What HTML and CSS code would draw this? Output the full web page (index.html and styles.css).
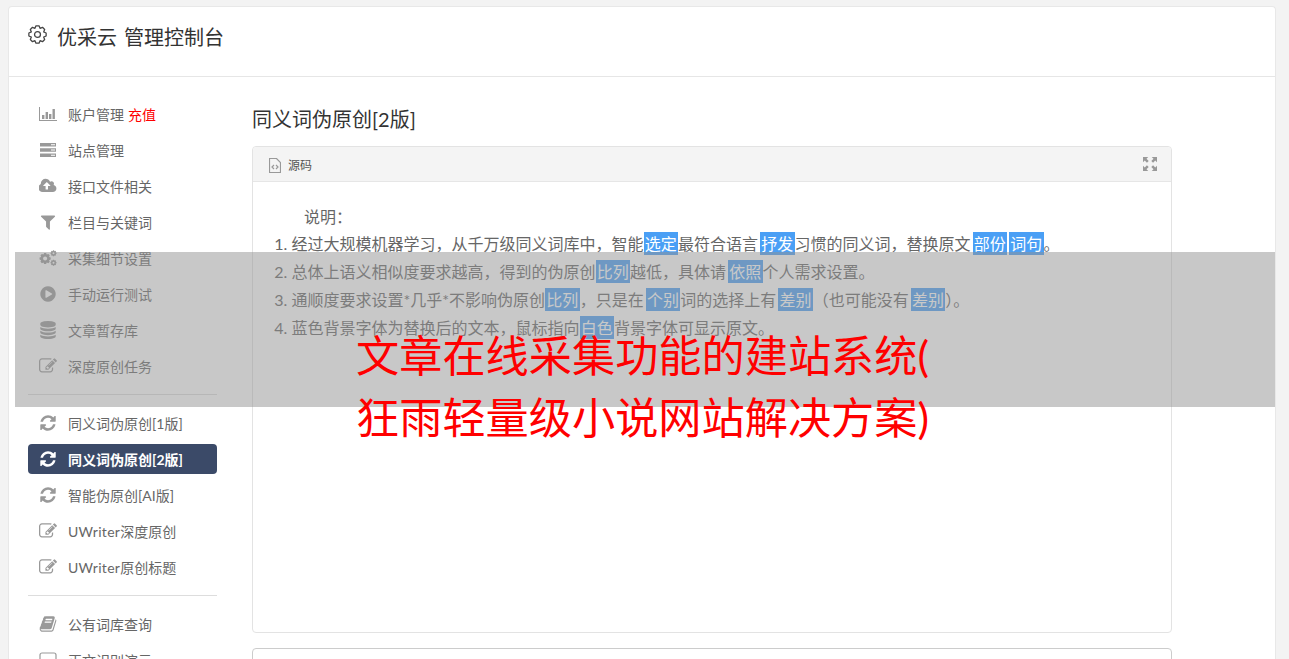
FILE: index.html
```html
<!doctype html>
<html lang="en">
  <head>
    <meta charset="UTF-8" />
    <meta name="viewport" content="width=device-width, initial-scale=1.0" />
    <title>优采云 管理控制台</title>
    <link rel="stylesheet" href="styles.css">
  </head>
  <body>
    <svg class="defs" width="0" height="0">
      <defs>
        <polygon id="cog" points="7.56,.82 10.44,.82 11.41,3.18 13.76,2.2 15.8,4.24 14.82,6.59 17.18,7.56 17.18,10.44 14.82,11.41 15.8,13.76 13.76,15.8 11.41,14.82 10.44,17.18 7.56,17.18 6.59,14.82 4.24,15.8 2.2,13.76 3.18,11.41 .82,10.44 .82,7.56 3.18,6.59 2.2,4.24 4.24,2.2 6.59,3.18" />
        <path id="refresh" d="M1639 1056q0 5-1 7-64 268-268 434.5t-478 166.5q-146 0-282.5-55t-243.5-157l-129 129q-19 19-45 19t-45-19-19-45v-448q0-26 19-45t45-19h448q26 0 45 19t19 45-19 45l-137 137q71 66 161 102t187 36q134 0 250-65t186-179q11-17 53-117 8-23 30-23h192q13 0 22.5 9.5t9.5 22.5zm25-800v448q0 26-19 45t-45 19h-448q-26 0-45-19t-19-45 19-45l138-138q-148-137-349-137-134 0-250 65t-186 179q-11 17-53 117-8 23-30 23h-199q-13 0-22.5-9.5t-9.5-22.5v-7q65-268 270-434.5t480-166.5q146 0 284 55.5t245 156.5l130-129q19-19 45-19t45 19 19 45z" />
        <path id="edit" d="M888 1184l116-116-152-152-116 116v56h96v96h56zm440-720q-16-16-33 1l-350 350q-17 17-1 33t33-1l350-350q17-17 1-33zm80 594v190q0 119-84.5 203.5t-203.5 84.5h-832q-119 0-203.5-84.5t-84.5-203.5v-832q0-119 84.5-203.5t203.5-84.5h832q63 0 117 25 15 7 18 23 3 17-9 29l-49 49q-14 14-32 8-23-6-45-6h-832q-66 0-113 47t-47 113v832q0 66 47 113t113 47h832q66 0 113-47t47-113v-126q0-13 9-22l64-64q15-15 35-7t20 29zm-96-738l288 288-672 672h-288v-288zm444 132l-92 92-288-288 92-92q28-28 68-28t68 28l152 152q28 28 28 68t-28 68z" />
      </defs>
    </svg>

    <div class="card">
      <div class="card-head">
        <svg class="head-gear" viewBox="0 0 18 18">
          <use href="#cog" />
          <circle cx="9" cy="9" r="2.8" />
        </svg>
        <span>优采云 管理控制台</span>
      </div>

      <div class="layout">
        <div class="sidebar">
          <a class="nav-item">
            <svg class="ico" viewBox="0 0 18 14"><path d="M0 0h1v13h17v1H0z" /><path d="M3 8h2.4v4H3zM6.6 5h2.4v7H6.6zM10 7h2.4v5H10zM13.5 2h2.4v10h-2.4z" /></svg>
            <span>账户管理</span><span class="recharge">充值</span>
          </a>
          <a class="nav-item">
            <svg class="ico" viewBox="0 0 18 14"><path d="M1 0h16v3.6H1zM1 5.2h16v3.6H1zM1 10.4h16V14H1z" /><path class="notch" d="M12 1.3h4v1h-4zM12 6.5h4v1h-4zM12 11.7h4v1h-4z" /></svg>
            <span>站点管理</span>
          </a>
          <a class="nav-item">
            <svg class="ico" viewBox="0 0 1920 1792"><path d="M1216 864q0-14-9-23l-352-352q-9-9-23-9t-23 9l-351 351q-10 12-10 24 0 14 9 23t23 9h224v352q0 13 9.5 22.5t22.5 9.5h192q13 0 22.5-9.5t9.5-22.5v-352h224q13 0 22.5-9.5t9.5-22.5zm640 288q0 159-112.5 271.5t-271.5 112.5h-1088q-185 0-316.5-131.5t-131.5-316.5q0-130 70-240t188-165q-2-30-2-43 0-212 150-362t362-150q156 0 285.5 87t188.5 231q71-62 166-62 106 0 181 75t75 181q0 76-41 138 130 31 213.5 135.5t83.5 238.5z" /></svg>
            <span>接口文件相关</span>
          </a>
          <a class="nav-item">
            <svg class="ico" viewBox="0 0 1792 1792"><path d="M1595 295q17 41-14 70l-493 493v742q0 42-39 59-13 5-25 5-27 0-45-19l-256-256q-19-19-19-45v-486l-493-493q-31-29-14-70 17-39 59-39h1280q42 0 59 39z" /></svg>
            <span>栏目与关键词</span>
          </a>
          <a class="nav-item">
            <svg class="ico" viewBox="0 0 18 16">
              <use href="#cog" transform="translate(0 2.4) scale(.68)" />
              <circle class="notch" cx="6.1" cy="8.5" r="2" />
              <use href="#cog" transform="translate(11.2 0) scale(.37)" />
              <circle class="notch" cx="14.5" cy="3.3" r="1" />
              <use href="#cog" transform="translate(11.2 9.4) scale(.37)" />
              <circle class="notch" cx="14.5" cy="12.7" r="1" />
            </svg>
            <span>采集细节设置</span>
          </a>
          <a class="nav-item">
            <svg class="ico" viewBox="0 0 1792 1792"><path d="M896 128q209 0 385.5 103t279.5 279.5 103 385.5-103 385.5-279.5 279.5-385.5 103-385.5-103-279.5-279.5-103-385.5 103-385.5 279.5-279.5 385.5-103zm384 823q32-18 32-55t-32-55l-544-320q-31-19-64-1-32 19-32 56v640q0 37 32 56 16 8 32 8 17 0 32-9z" /></svg>
            <span>手动运行测试</span>
          </a>
          <a class="nav-item">
            <svg class="ico" viewBox="0 0 1792 1792"><path d="M896 768q237 0 443-43t325-127v170q0 69-103 128t-280 93.5-385 34.5-385-34.5-280-93.5-103-128v-170q119 84 325 127t443 43zm0 768q237 0 443-43t325-127v170q0 69-103 128t-280 93.5-385 34.5-385-34.5-280-93.5-103-128v-170q119 84 325 127t443 43zm0-384q237 0 443-43t325-127v170q0 69-103 128t-280 93.5-385 34.5-385-34.5-280-93.5-103-128v-170q119 84 325 127t443 43zm0-1152q208 0 385 34.5t280 93.5 103 128v128q0 69-103 128t-280 93.5-385 34.5-385-34.5-280-93.5-103-128v-128q0-69 103-128t280-93.5 385-34.5z" /></svg>
            <span>文章暂存库</span>
          </a>
          <a class="nav-item">
            <svg class="ico" viewBox="0 0 1792 1792"><use href="#edit" /></svg>
            <span>深度原创任务</span>
          </a>

          <div class="nav-divider"></div>

          <a class="nav-item">
            <svg class="ico" viewBox="0 0 1792 1792"><use href="#refresh" /></svg>
            <span>同义词伪原创[1版]</span>
          </a>
          <a class="nav-item active">
            <svg class="ico" viewBox="0 0 1792 1792"><use href="#refresh" /></svg>
            <span>同义词伪原创[2版]</span>
          </a>
          <a class="nav-item">
            <svg class="ico" viewBox="0 0 1792 1792"><use href="#refresh" /></svg>
            <span>智能伪原创[AI版]</span>
          </a>
          <a class="nav-item">
            <svg class="ico" viewBox="0 0 1792 1792"><use href="#edit" /></svg>
            <span><span class="latin">UWriter</span>深度原创</span>
          </a>
          <a class="nav-item">
            <svg class="ico" viewBox="0 0 1792 1792"><use href="#edit" /></svg>
            <span><span class="latin">UWriter</span>原创标题</span>
          </a>

          <div class="nav-divider"></div>

          <a class="nav-item">
            <svg class="ico" viewBox="0 0 1792 1792"><path d="M1703 478q40 57 18 129l-275 906q-19 64-76.5 107.5t-122.5 43.5h-923q-77 0-148.5-53.5t-99.5-131.5q-24-67-2-127 0-4 3-27t4-37q1-8-3-21.5t-3-19.5q2-11 8-21t16.5-23.5 16.5-23.5q23-38 45-91.5t30-91.5q3-10 .5-30t-.5-28q3-11 17-28t17-23q21-36 42-92t25-90q1-9-2.5-32t.5-28q4-13 22-30.5t22-22.5q19-26 42.5-84.5t27.5-96.5q1-8-3-25.5t-2-26.5q2-8 9-18t18-23 17-21q8-12 16.5-30.5t15-35 16-36 19.5-32 26.5-23.5 36-11.5 47.5 5.5l-1 3q38-9 51-9h761q74 0 114 56t18 130l-274 906q-36 119-71.5 153.5t-128.5 34.5h-869q-27 0-38 15-11 16-1 43 24 70 144 70h923q29 0 56-15.5t35-41.5l300-987q7-22 5-57 38 15 59 43zm-1064 2q-4 13 2 22.5t20 9.5h608q13 0 25.5-9.5t16.5-22.5l21-64q4-13-2-22.5t-20-9.5h-608q-13 0-25.5 9.5t-16.5 22.5zm-83 256q-4 13 2 22.5t20 9.5h608q13 0 25.5-9.5t16.5-22.5l21-64q4-13-2-22.5t-20-9.5h-608q-13 0-25.5 9.5t-16.5 22.5z" /></svg>
            <span>公有词库查询</span>
          </a>
          <a class="nav-item">
            <svg class="ico" viewBox="0 0 18 16"><rect class="outline" x="1" y="1" width="16" height="14" rx="2" /></svg>
            <span>正文识别演示</span>
          </a>
        </div>

        <div class="main">
          <h3 class="page-title">同义词伪原创[2版]</h3>

          <div class="panel">
            <div class="panel-head">
              <svg class="file-ico" viewBox="0 0 12 15">
                <path class="outline" d="M.5.5h7l4 4v10H.5z" />
                <path class="outline" d="M5 7L3 9l2 2M7 7l2 2-2 2" />
              </svg>
              <span class="panel-label">源码</span>
              <svg class="expand-ico" viewBox="0 0 16 16">
                <path d="M0 0h6L4 2l2.5 2.5-2 2L2 4 0 6zM16 0v6l-2-2-2.5 2.5-2-2L12 2l-2-2zM0 16v-6l2 2 2.5-2.5 2 2L4 14l2 2zM16 16h-6l2-2-2.5-2.5 2-2L14 12l2-2z" />
              </svg>
            </div>
            <div class="panel-body">
              <p class="note-title">说明：</p>
              <ol class="notes">
                <li>经过大规模机器学习，从千万级同义词库中，智能<span class="swap">选定</span>最符合语言<span class="swap">抒发</span>习惯的同义词，替换原文<span class="swap">部份</span><span class="swap">词句</span>。</li>
                <li>总体上语义相似度要求越高，得到的伪原创<span class="swap">比列</span>越低，具体请<span class="swap">依照</span>个人需求设置。</li>
                <li>通顺度要求设置*几乎*不影响伪原创<span class="swap">比列</span>，只是在<span class="swap">个别</span>词的选择上有<span class="swap">差别</span>（也可能没有<span class="swap">差别</span>）。</li>
                <li>蓝色背景字体为替换后的文本，鼠标指向<span class="swap">白色</span>背景字体可显示原文。</li>
              </ol>
            </div>
          </div>

          <div class="panel panel-next"></div>
        </div>
      </div>
    </div>

    <div class="banner">
      <h1 class="banner-title">文章在线采集功能的建站系统(<br />狂雨轻量级小说网站解决方案)</h1>
    </div>
  </body>
</html>
```

FILE: styles.css
```css
html,
body {
  height: 100%;
  overflow: hidden;
}
body {
  margin: 0;
  background: #f3f3f3;
  font-family: Lato, "Noto Sans CJK SC", sans-serif;
  color: #666;
}
.defs {
  display: block;
  height: 0;
}
.card {
  margin: 6px 13px 0 8px;
  background: #fff;
  border: 1px solid #e8e8e8;
  border-bottom: 0;
  border-radius: 4px 4px 0 0;
}
.card-head {
  display: flex;
  align-items: center;
  gap: 10px;
  height: 58px;
  padding: 0 0 11px 19px;
  border-bottom: 1px solid #e6e6e6;
  font-size: 20px;
  word-spacing: 2px;
  color: #333;
}
.head-gear {
  width: 19px;
  height: 19px;
  margin-bottom: 3px;
  fill: none;
  stroke: #444;
  stroke-width: 1.2;
  stroke-linejoin: round;
}
.layout {
  display: flex;
  align-items: flex-start;
}

.sidebar {
  width: 189px;
  margin-left: 19px;
  padding-top: 22px;
  flex-shrink: 0;
}
.nav-item {
  display: flex;
  align-items: center;
  height: 30px;
  margin-bottom: 6px;
  padding-left: 11px;
  border-radius: 4px;
  font-size: 14px;
  color: #666;
}
.nav-item .ico {
  width: 18px;
  height: 18px;
  margin-right: 11px;
  fill: #999;
  flex-shrink: 0;
}
.notch {
  fill: #fff;
}
.outline {
  fill: none;
  stroke: #999;
  stroke-width: 1.2;
}
.recharge {
  margin-left: 4px;
  color: #f00;
}
.latin {
  letter-spacing: 0.3px;
}
.nav-item.active {
  background: #3b4a68;
  color: #fff;
  font-weight: 700;
}
.nav-item.active .ico {
  fill: #fff;
}
.nav-divider {
  height: 1px;
  margin: 13px 0;
  background: #ddd;
}

.main {
  width: 920px;
  margin-left: 35px;
}
.page-title {
  margin: 26px 0 0;
  height: 43px;
  line-height: 32px;
  font-size: 20px;
  font-weight: 400;
  color: #333;
}
.panel {
  height: 485px;
  background: #fff;
  border: 1px solid #e3e3e3;
  border-radius: 4px;
}
.panel-next {
  height: 60px;
  margin-top: 15px;
  border-color: #ccc;
}
.panel-head {
  display: flex;
  align-items: center;
  height: 34px;
  padding: 0 14px 0 16px;
  background: #f4f4f4;
  border-bottom: 1px solid #e6e6e6;
  border-radius: 4px 4px 0 0;
}
.file-ico {
  width: 12px;
  height: 15px;
  margin-top: 2px;
}
.panel-label {
  margin-left: 7px;
  font-size: 12px;
  color: #555;
}
.expand-ico {
  width: 14px;
  height: 14px;
  margin-left: auto;
  fill: #999;
}
.panel-body {
  padding-top: 21px;
  font-size: 16px;
  line-height: 28px;
  color: #666;
}
.note-title {
  margin: 0 0 -1px 51px;
}
.notes {
  margin: 0;
  padding-left: 38.5px;
}
.swap {
  padding: 2px 1.25px;
  background: #4a9ff5;
  color: #fff;
}
.swap + .swap {
  margin-left: 2px;
}

.banner {
  position: absolute;
  left: 15px;
  top: 252px;
  width: 1260px;
  height: 155px;
  background: rgba(146, 146, 146, 0.5);
}
.banner-title {
  margin: 0;
  padding: 72px 0 0 341px;
  font-size: 43.2px;
  font-weight: 400;
  line-height: 62px;
  color: #f00;
}
```
